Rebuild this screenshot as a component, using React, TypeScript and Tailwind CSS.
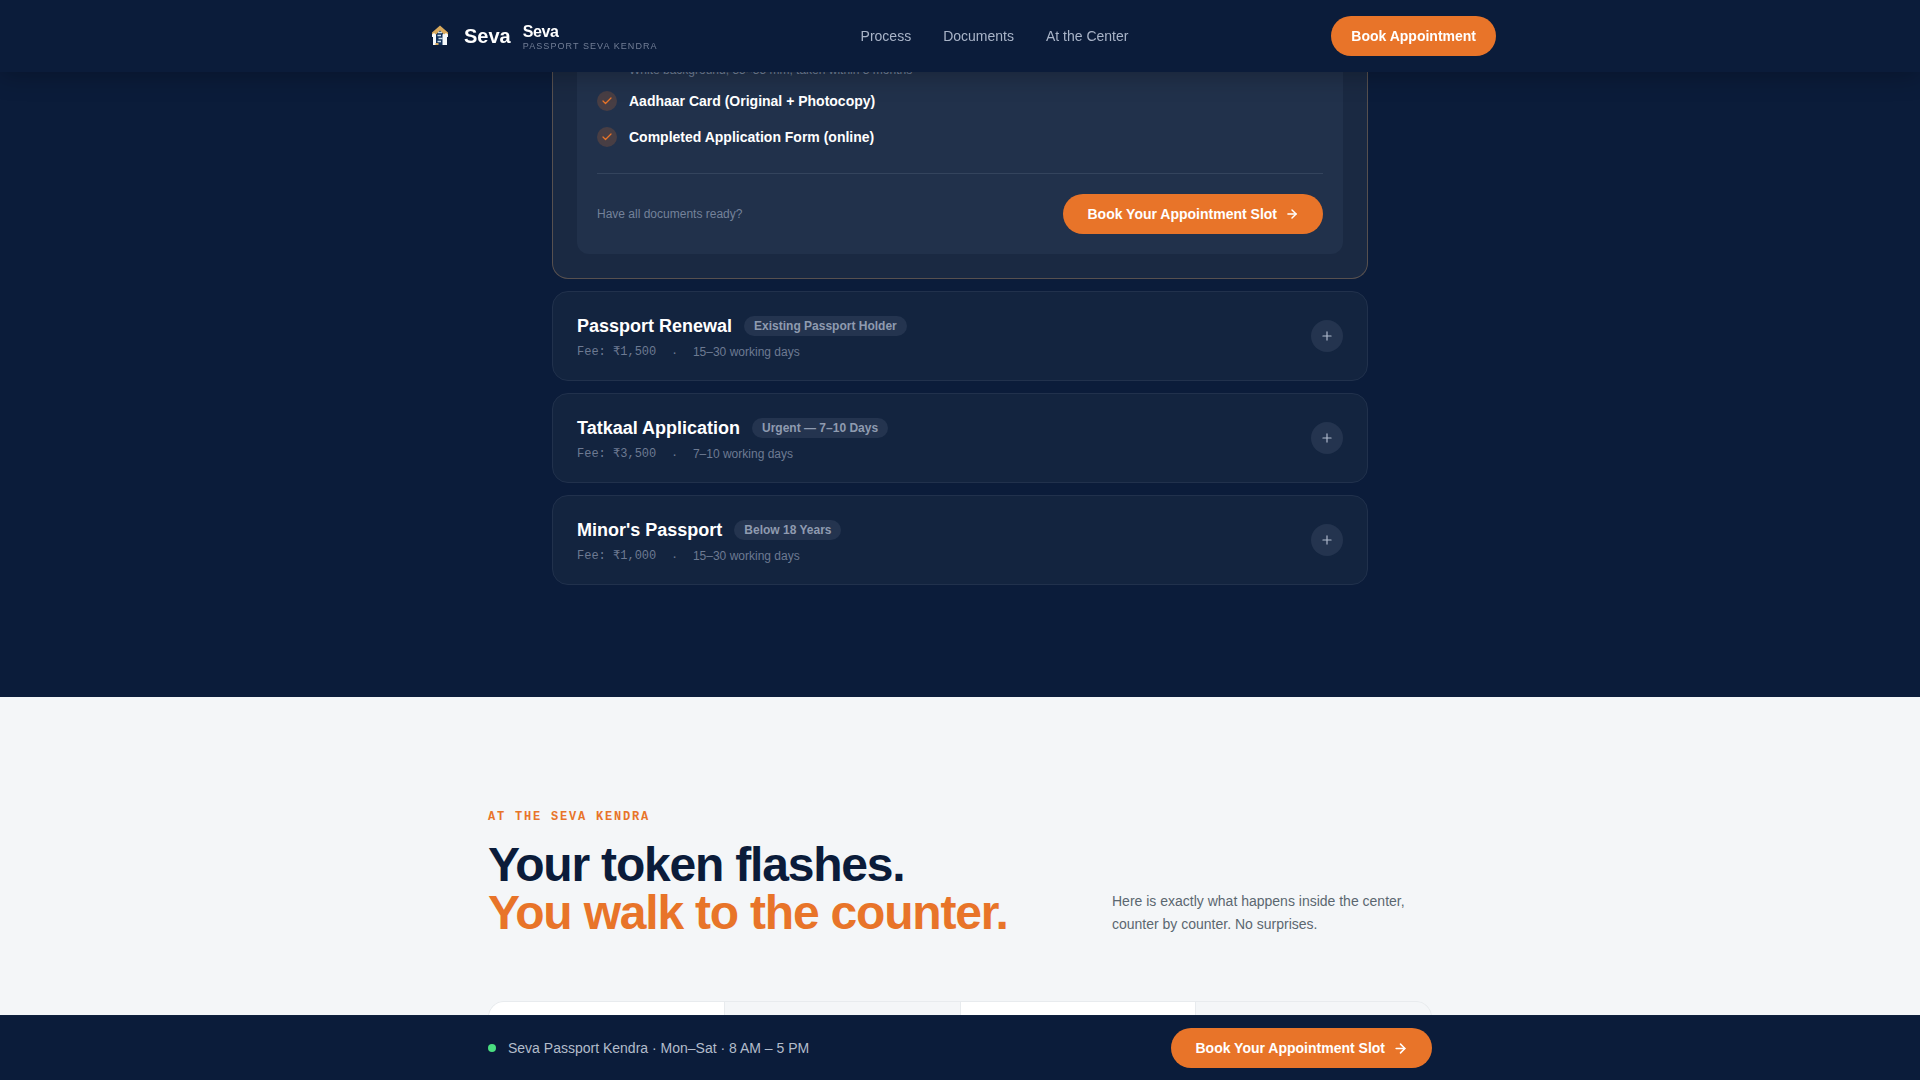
import React from "react";
import { ArrowRight, Check, Plus } from "lucide-react";

const services = [
  { name: "Passport Renewal", tag: "Existing Passport Holder", fee: "Fee: ₹1,500", time: "15–30 working days" },
  { name: "Tatkaal Application", tag: "Urgent — 7–10 Days", fee: "Fee: ₹3,500", time: "7–10 working days" },
  { name: "Minor's Passport", tag: "Below 18 Years", fee: "Fee: ₹1,000", time: "15–30 working days" },
];

const documents = [
  { title: "Passport-Size Photographs", note: "White background, 35×35 mm, taken within 3 months" },
  { title: "Aadhaar Card (Original + Photocopy)", note: "" },
  { title: "Completed Application Form (online)", note: "" },
];

const links = [
  { label: "Process", href: "#process" },
  { label: "Documents", href: "#documents" },
  { label: "At the Center", href: "#center" },
];

function Logo() {
  return (
    <svg viewBox="0 0 32 32" className="size-8" aria-hidden="true">
      <path d="M11.500 13 16 9.500l4.500 3.500V25h-9z" fill="#12305a" />
      <path d="M8 12.500 16 5.500l8 7V15h-3.500L16 10.500 11.500 15H8z" fill="#d9a95c" />
      <path d="M8 14.500 10 13l2 1.500V25H9v-8H8zM24 14.500 22 13l-2 1.500V25h3v-8h1z" fill="#f6f9fb" />
      <path d="M14 12.500h4M13.500 15.500h3.500M14.500 18.500h4M13.500 21.500h3.500" stroke="#c9dbe8" strokeWidth="1.400" />
      <path d="M18.500 14.500 20 13.500V25h-1.500z" fill="#f6f9fb" />
      <path d="M11.500 23h3v2h-3z" fill="#d9a95c" />
    </svg>
  );
}

function SlotButton({ iconSize }: { iconSize: number }) {
  return (
    <button className="flex h-10 items-center gap-2 rounded-full bg-[#e87429] px-6 text-sm font-bold text-white">
      Book Your Appointment Slot
      <ArrowRight size={iconSize} strokeWidth={2.5} />
    </button>
  );
}

function Header() {
  return (
    <header className="fixed inset-x-0 top-0 z-20 bg-[#0b1c3a] shadow-[0_4px_24px_rgba(0,0,0,0.25)]">
      <div className="mx-auto flex h-18 max-w-280 items-center justify-between px-6">
        <a href="#top" className="flex items-center">
          <Logo />
          <span className="ml-2 text-xl font-bold">Seva</span>
          <span className="ml-3 flex flex-col pt-1">
            <span className="text-base leading-4 font-bold tracking-tight">Seva</span>
            <span className="text-[9px] leading-3 tracking-[0.12em] text-[#727e96]">PASSPORT SEVA KENDRA</span>
          </span>
        </a>
        <nav className="flex gap-8 text-sm text-[#a9b4c8]">
          {links.map((l) => (
            <a key={l.label} href={l.href}>{l.label}</a>
          ))}
        </nav>
        <button className="h-10 rounded-full bg-[#e87429] px-5 text-sm font-bold">Book Appointment</button>
      </div>
    </header>
  );
}

function DocumentsSection() {
  return (
    <section id="documents" className="bg-[#0b1c3a] pb-28">
      <div className="mx-auto flex max-w-216 flex-col gap-3 px-6">
        <article className="rounded-b-2xl border border-t-0 border-[#57504f] bg-[#1a2942] px-6 pb-6">
          <div className="rounded-b-xl bg-[#21314b] px-5 pt-9 pb-5">
            <ul className="flex flex-col gap-3.5">
              {documents.map((d) => (
                <li key={d.title} className="flex items-start gap-3">
                  <span className="mt-px flex size-5 items-center justify-center rounded-full bg-[#e87429]/20 text-[#e87429]">
                    <Check size={12} strokeWidth={2.5} />
                  </span>
                  <div>
                    <p className="text-sm leading-[22px] font-bold">{d.title}</p>
                    {d.note && <p className="mt-1.5 text-xs leading-3 text-[#74829a]">{d.note}</p>}
                  </div>
                </li>
              ))}
            </ul>
            <div className="mt-[25px] flex items-center justify-between border-t border-[#34445d] pt-5">
              <p className="text-xs text-[#74829a]">Have all documents ready?</p>
              <SlotButton iconSize={14} />
            </div>
          </div>
        </article>
        {services.map((s) => (
          <article key={s.name} className="flex items-center justify-between rounded-2xl border border-[#21314c] bg-[#13243f] px-6 py-5">
            <div>
              <div className="flex items-center gap-3">
                <h3 className="text-lg leading-7 font-bold">{s.name}</h3>
                <span className="rounded-full bg-[#24344f] px-2.5 py-0.5 text-xs font-bold text-[#8f9bb0]">{s.tag}</span>
              </div>
              <div className="mt-1 flex gap-4 text-xs text-[#6d7a92]">
                <span className="font-['Liberation_Mono',monospace]">{s.fee}</span>
                <span className="text-sm leading-4">·</span>
                <span>{s.time}</span>
              </div>
            </div>
            <button aria-label={`Show ${s.name}`} className="flex size-8 items-center justify-center rounded-full bg-[#24344f] text-[#b0bbce]">
              <Plus size={14} />
            </button>
          </article>
        ))}
      </div>
    </section>
  );
}

function CenterSection() {
  return (
    <section id="center" className="min-h-96 bg-[#f4f6f8] pt-28">
      <div className="mx-auto max-w-248 px-6">
        <div className="flex items-end justify-between">
          <div>
            <p className="mb-4 font-['Liberation_Mono',monospace] text-xs font-bold tracking-[0.15em] text-[#e87429]">AT THE SEVA KENDRA</p>
            <h2 className="text-5xl leading-none font-bold tracking-tight text-[#0b1c3a]">
              Your token flashes.
              <br />
              <span className="text-[#e87429]">You walk to the counter.</span>
            </h2>
          </div>
          <p className="w-80 pb-px text-sm leading-[23px] text-[#5b6770]">
            Here is exactly what happens inside the center, counter by counter. No surprises.
          </p>
        </div>
        <div className="mt-16 grid h-48 grid-cols-4 gap-px overflow-hidden rounded-2xl border border-[#e8ebee] bg-[#e8ebee]">
          <div className="bg-white" />
          <div className="bg-[#f4f6f8]" />
          <div className="bg-white" />
          <div className="bg-[#f4f6f8]" />
        </div>
      </div>
    </section>
  );
}

function BottomBar() {
  return (
    <div className="fixed inset-x-0 bottom-0 z-20 border-t border-[#0e203d] bg-[#0b1c3a] py-3">
      <div className="mx-auto flex max-w-248 items-center justify-between px-6">
        <p className="flex items-center gap-3 text-sm text-[#b3bccb]">
          <span className="size-2 rounded-full bg-[#4ade80]" />
          Seva Passport Kendra · Mon–Sat · 8 AM – 5 PM
        </p>
        <SlotButton iconSize={15} />
      </div>
    </div>
  );
}

export default function App() {
  return (
    <div id="top" className="h-screen overflow-hidden bg-[#f4f6f8] font-['Liberation_Sans',Arial,sans-serif] text-white">
      <Header />
      <main>
        <DocumentsSection />
        <CenterSection />
      </main>
      <BottomBar />
    </div>
  );
}
